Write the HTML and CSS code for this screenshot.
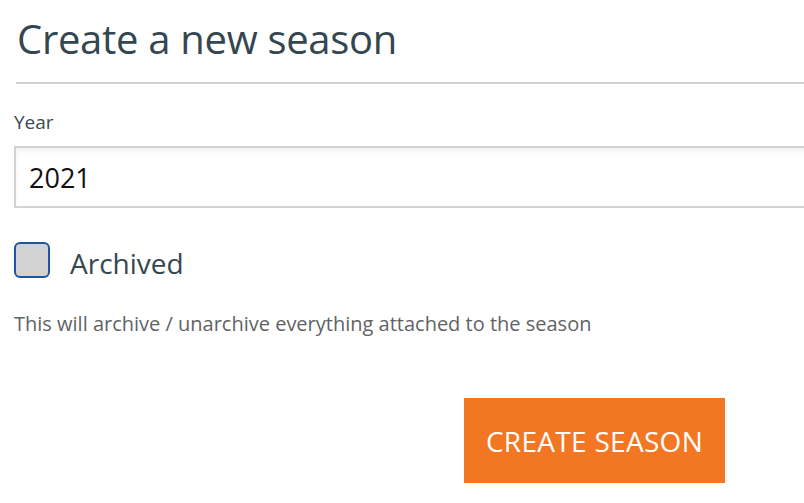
FILE: index.html
```html
<!DOCTYPE html>
<html lang="en">
<head>
    <meta charset="UTF-8">
    <meta name="viewport" content="width=device-width, initial-scale=1.0">
    <title>Create a new season</title>
    <link rel="stylesheet" href="styles.css">
</head>
<body>
    <div class="page">
        <h1 class="title">Create a new season</h1>
        <form class="season-form" onsubmit="return false">
            <label class="field-label" for="year">Year</label>
            <input class="text-input" type="text" id="year" value="2021">

            <label class="check-row">
                <input class="check-input" type="checkbox" id="archived">
                <span class="check-box"></span>
                <span class="check-label">Archived</span>
            </label>
            <p class="hint">This will archive / unarchive everything attached to the season</p>

            <div class="actions">
                <button class="primary-btn" type="submit">CREATE SEASON</button>
            </div>
        </form>
    </div>
</body>
</html>
```

FILE: styles.css
```css
html, body {
    margin: 0;
    background: #ffffff;
    overflow: hidden;
}
body {
    font-family: "Open Sans", "Liberation Sans", sans-serif;
    color: #37474f;
}
.page {
    width: 1200px;
    padding-left: 14px;
}
.title {
    margin: 0 0 0 2px;
    padding: 12px 0 0 1px;
    height: 70px;
    font-size: 40px;
    font-weight: 400;
    line-height: 54px;
    letter-spacing: -0.3px;
    color: #34464f;
    border-bottom: 2px solid #d3d3d3;
}
.season-form {
    display: flex;
    flex-direction: column;
    padding-top: 26px;
}
.field-label {
    font-size: 19px;
    line-height: 24px;
    color: #3a4a52;
    margin-bottom: 12px;
}
.text-input {
    box-sizing: border-box;
    height: 62px;
    width: 100%;
    padding: 0 13px;
    font-family: inherit;
    font-size: 27px;
    color: #111111;
    border: 2px solid #d3d3d3;
    box-shadow: inset 0 3px 4px rgba(0, 0, 0, 0.06);
    background: #ffffff;
    outline: none;
}
.check-row {
    display: flex;
    align-items: flex-start;
    margin-top: 34px;
    cursor: pointer;
}
.check-input {
    display: none;
}
.check-box {
    box-sizing: border-box;
    width: 36px;
    height: 36px;
    border: 2px solid #1f55a0;
    border-radius: 6px;
    background: #d3d3d3;
}
.check-label {
    margin-left: 20px;
    padding-top: 3px;
    font-size: 28px;
    line-height: 36px;
    color: #37474f;
}
.hint {
    margin: 30px 0 0;
    font-size: 20px;
    line-height: 26px;
    color: #5f6366;
}
.actions {
    display: flex;
    padding-left: 450px;
    margin-top: 61px;
}
.primary-btn {
    width: 261px;
    height: 85px;
    border: none;
    background: #f37722;
    color: #ffffff;
    font-family: inherit;
    font-size: 28px;
    letter-spacing: 0.3px;
    cursor: pointer;
}
```
